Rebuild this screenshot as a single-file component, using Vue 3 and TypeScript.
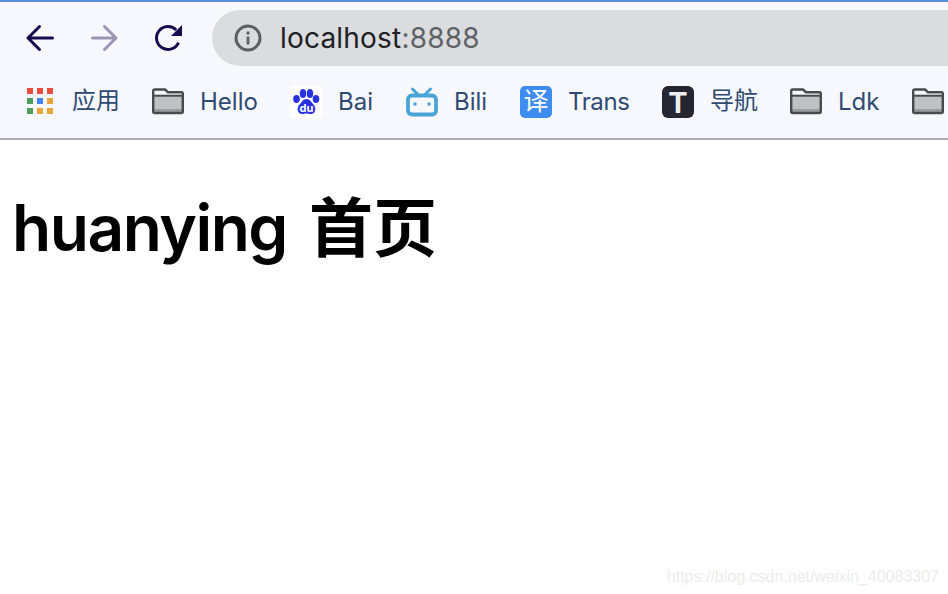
<script setup lang="ts">
interface Bookmark { label: string; icon: string; width: number; cjk?: boolean; tight?: boolean }
const bookmarks: Bookmark[] = [
  { label: '应用', icon: 'apps', width: 48, cjk: true },
  { label: 'Hello', icon: 'folder', width: 58 },
  { label: 'Bai', icon: 'baidu', width: 36 },
  { label: 'Bili', icon: 'bili', width: 34 },
  { label: 'Trans', icon: 'trans', width: 62, tight: true },
  { label: '导航', icon: 'tee', width: 48, cjk: true },
  { label: 'Ldk', icon: 'folder', width: 42 },
  { label: '', icon: 'folder', width: 0 },
]
const appColors = ['#e94b3c','#e94b3c','#e94b3c','#4f9d5f','#4285f4','#e8a63a','#4f9d5f','#e8a63a','#e8a63a']
</script>

<template>
  <div class="page">
    <header class="chrome">
      <div class="toolbar">
        <button class="nav">
          <svg width="32" height="32" viewBox="0 0 32 32" fill="none" stroke="#150b4d" stroke-width="3" stroke-linecap="round" stroke-linejoin="round"><path d="M28.500 16H4.500M15.500 4.500 4 16l11.500 11.500"/></svg>
        </button>
        <button class="nav">
          <svg width="32" height="32" viewBox="0 0 32 32" fill="none" stroke="#9a96b6" stroke-width="3" stroke-linecap="round" stroke-linejoin="round"><path d="M4.500 16H27.500M16.500 4.500 28 16 16.500 27.500"/></svg>
        </button>
        <button class="nav">
          <svg width="32" height="32" viewBox="0 0 32 32" fill="none"><path d="M26.500 20.600A11.460 11.460 0 1 1 24.200 8" stroke="#150b4d" stroke-width="3"/><path d="M30 3V14H19z" fill="#150b4d"/></svg>
        </button>
        <div class="omnibox">
          <svg class="info" width="30" height="30" viewBox="0 0 30 30" fill="none"><circle cx="15" cy="15" r="12" stroke="#5f6063" stroke-width="3"/><rect x="13.600" y="13.500" width="2.800" height="8" fill="#5f6063"/><rect x="13.600" y="8.500" width="2.800" height="3" fill="#5f6063"/></svg>
          <span class="url">localhost<span class="port">:8888</span></span>
        </div>
      </div>
      <nav class="bookmarks">
        <div v-for="(b, i) in bookmarks" :key="i" class="bookmark">
          <div v-if="b.icon === 'apps'" class="apps">
            <i v-for="(c, j) in appColors" :key="j" :style="{ background: c }"></i>
          </div>
          <svg v-else-if="b.icon === 'folder'" width="32" height="32" viewBox="0 0 32 32">
            <path d="M1.200 5a1.500 1.500 0 0 1 1.500-1.500H13l3 2.700h13.300a1.500 1.500 0 0 1 1.500 1.500V25.500a1.500 1.500 0 0 1-1.500 1.500H2.700a1.500 1.500 0 0 1-1.500-1.500z" fill="#f6f8fd"/>
            <path d="M2 10h28v16H2z" fill="#bfc0c3"/>
            <path d="M2 23h28v3H2z" fill="#9c9da0"/>
            <path d="M1.200 5a1.500 1.500 0 0 1 1.500-1.500H13l3 2.700h13.300a1.500 1.500 0 0 1 1.500 1.500V25.500a1.500 1.500 0 0 1-1.500 1.500H2.700a1.500 1.500 0 0 1-1.500-1.500z" fill="none" stroke="#48494c" stroke-width="2.400"/>
            <path d="M1 9.700h30" stroke="#48494c" stroke-width="2"/>
          </svg>
          <svg v-else-if="b.icon === 'baidu'" width="32" height="32" viewBox="0 0 32 32">
            <rect width="32" height="32" rx="3" fill="#fff"/>
            <g fill="#2932e1">
              <ellipse cx="6.500" cy="13" rx="3.300" ry="4"/>
              <ellipse cx="13" cy="7.500" rx="3.200" ry="4.500"/>
              <ellipse cx="20" cy="7.500" rx="3.200" ry="4.500"/>
              <ellipse cx="26" cy="13" rx="3.300" ry="4"/>
              <path d="M16.500 13c3.500 0 4.500 3 7 5.500 2.500 2.500 3 8.500-2 9.500-2 .4-3.500-.5-5-.5s-3 .9-5 .5c-5-1-4.500-7-2-9.500 2.500-2.500 3.500-5.500 7-5.500z"/>
            </g>
            <text x="16.500" y="26" text-anchor="middle" font-family="Inter, sans-serif" font-size="11" font-weight="700" fill="#fff">du</text>
          </svg>
          <svg v-else-if="b.icon === 'bili'" width="32" height="32" viewBox="0 0 32 32">
            <path d="M6.500 3l5 5M24.500 3l-5 5" stroke="#4aa3d6" stroke-width="3" stroke-linecap="round"/>
            <rect x="2" y="9.500" width="28" height="19" rx="4" fill="none" stroke="#4aa3d6" stroke-width="3.800"/>
            <circle cx="9" cy="18" r="1.800" fill="#4aa3d6"/>
            <circle cx="23" cy="18" r="1.800" fill="#4aa3d6"/>
          </svg>
          <div v-else-if="b.icon === 'trans'" class="tile trans">译</div>
          <div v-else-if="b.icon === 'tee'" class="tile tee">T</div>
          <span v-if="b.label" class="label" :class="{ cjk: b.cjk, tight: b.tight }" :style="{ width: b.width + 'px' }">{{ b.label }}</span>
        </div>
      </nav>
    </header>
    <main>
      <h1><span class="latin">huanying</span> 首页</h1>
    </main>
    <div class="mark">https://blog.csdn.net/weixin_40083307</div>
  </div>
</template>

<style scoped>
.page {
  position: relative;
  width: 948px;
  height: 594px;
  overflow: hidden;
  background: #fff;
  font-family: Inter, "Noto Sans CJK SC", sans-serif;
}
.chrome {
  background: #f6f8fd;
  border-top: 2px solid #5a8fdd;
  border-bottom: 2px solid #aaabae;
  height: 140px;
  box-sizing: border-box;
  overflow: hidden;
}
.toolbar {
  display: flex;
  align-items: center;
  height: 72px;
  padding-left: 16px;
  gap: 16px;
}
.nav {
  flex: none;
  width: 48px;
  height: 48px;
  display: flex;
  align-items: center;
  justify-content: center;
  padding: 0;
  border: 0;
  background: none;
}
.omnibox {
  flex: none;
  display: flex;
  align-items: center;
  width: 800px;
  height: 56px;
  margin-left: 4px;
  padding-left: 21px;
  box-sizing: border-box;
  border-radius: 28px;
  background: #dbdcdf;
}
.info { flex: none; }
.url {
  margin-left: 17px;
  font-size: 28px;
  letter-spacing: 0.2px;
  color: #202124;
}
.port { color: #5f6368; }
.bookmarks {
  display: flex;
  align-items: center;
  gap: 32px;
  height: 48px;
  margin-top: 4px;
  padding-left: 24px;
  white-space: nowrap;
}
.bookmark {
  flex: none;
  display: flex;
  align-items: center;
  gap: 16px;
}
.bookmark svg { display: block; flex: none; }
.apps {
  width: 32px;
  height: 32px;
  display: grid;
  grid-template-columns: repeat(3, 6px);
  grid-auto-rows: 6px;
  gap: 4px;
  padding: 2px 3px;
  box-sizing: border-box;
}
.tile {
  width: 32px;
  height: 32px;
  display: flex;
  align-items: center;
  justify-content: center;
}
.trans {
  border-radius: 5px;
  background: #3f8cf0;
  color: #fff;
  font-size: 25px;
  line-height: 30px;
  padding-bottom: 2px;
  box-sizing: border-box;
}
.tee {
  border-radius: 6px;
  background: #262633;
  color: #eeeeee;
  font-size: 29px;
  font-weight: 700;
}
.label {
  display: block;
  font-size: 24px;
  line-height: 32px;
  color: #2f4a72;
}
.label.cjk { margin-bottom: 3px; }
.label.tight { letter-spacing: -0.4px; }
main { padding: 0 12px; }
h1 {
  margin: 48px 0 0;
  font-size: 64px;
  font-weight: 700;
  line-height: 80px;
  color: #000;
}
.latin {
  font-weight: 600;
  letter-spacing: -1.5px;
  margin-right: 7px;
}
.mark {
  position: absolute;
  right: 9px;
  bottom: 8px;
  font-family: "Liberation Sans", sans-serif;
  font-size: 16px;
  color: #ececec;
}
</style>
